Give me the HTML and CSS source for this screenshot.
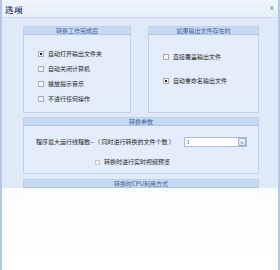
FILE: index.html
```html
<!DOCTYPE html>
<html lang="zh">
<head>
<meta charset="utf-8">
<link rel="stylesheet" href="styles.css">
</head>
<body>
<div class="window">
  <div class="titlebar">
    <span class="title">选项</span>
    <span class="close">x</span>
  </div>
  <div class="content">
    <div class="row">
      <div class="group g1">
        <div class="ghead">转换工作完成后</div>
        <div class="gbody list1">
          <label class="item"><span class="cb checked"></span>自动打开输出文件夹</label>
          <label class="item"><span class="cb"></span>自动关闭计算机</label>
          <label class="item"><span class="cb"></span>播放提示音乐</label>
          <label class="item"><span class="cb"></span>不进行任何操作</label>
        </div>
      </div>
      <div class="group g2">
        <div class="ghead">如果输出文件存在时</div>
        <div class="gbody list2">
          <label class="item"><span class="cb"></span>直接覆盖输出文件</label>
          <label class="item"><span class="cb checked"></span>自动重命名输出文件</label>
        </div>
      </div>
    </div>
    <div class="group g3">
      <div class="ghead">转换参数</div>
      <div class="gbody params">
        <div class="threads">
          <span>程序最大运行线程数--（ 同时进行转换的文件个数 ）</span>
          <span class="select"><span class="val">1</span><span class="btn"></span></span>
        </div>
        <label class="item preview"><span class="cb small"></span>转换时进行实时视频预览</label>
      </div>
    </div>
    <div class="group g4">
      <div class="ghead">转换时CPU利用方式</div>
      <div class="gbody cpu"></div>
    </div>
  </div>
  <div class="fade"></div>
</div>
</body>
</html>
```
FILE: styles.css
```css
* { box-sizing: border-box; }
html, body { margin: 0; padding: 0; background: #ffffff; }
body { width: 280px; height: 270px; overflow: hidden; font-family: "Noto Sans CJK SC", "Noto Sans", sans-serif; }
.window {
  position: relative;
  width: 280px; height: 270px;
  background: #dfe9f8;
  border-left: 2px solid #b5c8e3;
  border-right: 2px solid #b5c8e3;
  overflow: hidden;
}
.titlebar {
  height: 18px;
  display: flex; align-items: center; justify-content: space-between;
  padding: 0 4px 0 3px;
  background: linear-gradient(#f1f5fc, #e6eef9);
  border-bottom: 1px solid #cfdcef;
}
.title { font-size: 8.5px; font-weight: 700; color: #1c2f55; letter-spacing: 0.5px; font-family: "Noto Serif CJK SC", "Noto Sans CJK SC", serif; }
.close { font-size: 7px; color: #6d7f99; font-family: "DejaVu Sans", sans-serif; margin-top: -2px; }
.content { padding: 8px 19px 0 21px; display: flex; flex-direction: column; gap: 4px; }
.row { display: flex; gap: 17px; }
.group {
  border: 1px solid #bed0ea;
  background: #e4edfa;
  border-radius: 1px;
}
.g1 { width: 108px; height: 87px; }
.g2 { width: 111px; height: 87px; }
.g3 { height: 57px; }
.g4 { height: 40px; margin-top: 1px; }
.ghead {
  height: 8px;
  background: #c6d9f1;
  border-bottom: 1px solid #b0c6e6;
  color: #3d5d96;
  font-size: 6px; line-height: 8px;
  text-align: center;
}
.gbody { font-size: 6px; color: #222; }
.item { display: flex; align-items: center; height: 8px; line-height: 8px; }
.cb {
  width: 6px; height: 6px; flex: none;
  border: 1px solid #a9aeb6;
  background: #f6f7f9;
  margin-right: 4px;
  position: relative;
}
.cb.checked::after {
  content: ""; position: absolute; left: 1px; top: 1px; width: 2px; height: 2px; background: #1a1a1a;
}
.list1 { padding: 15px 0 0 14px; display: flex; flex-direction: column; gap: 7px; }
.list2 { padding: 18px 0 0 14px; display: flex; flex-direction: column; gap: 16px; }
.params { padding: 10px 0 0 12px; }
.threads { display: flex; align-items: center; gap: 9px; height: 11px; }
.select {
  width: 63px; height: 10px;
  border: 1px solid #a8bcd8;
  background: #ffffff;
  display: flex; justify-content: space-between; align-items: center;
  font-size: 5px;
}
.select .val { padding-left: 2px; color: #333; }
.select .btn {
  width: 8px; height: 8px;
  border: 1px solid #9cb0cc;
  background: linear-gradient(#eef3fa, #d5e1f1);
  position: relative;
}
.select .btn::after {
  content: ""; position: absolute; left: 2px; top: 3px;
  border-left: 1.5px solid transparent; border-right: 1.5px solid transparent; border-top: 2px solid #5a6c88;
}
.preview { margin: 11px 0 0 59px; }
.cb.small { width: 5px; height: 5px; border-color: #c3c8d0; margin-right: 4px; }
.fade {
  position: absolute; left: 0; right: 0; top: 188px; bottom: 0;
  background: linear-gradient(rgba(255,255,255,0.82), rgba(255,255,255,0.97) 30%, #ffffff);
}
```
